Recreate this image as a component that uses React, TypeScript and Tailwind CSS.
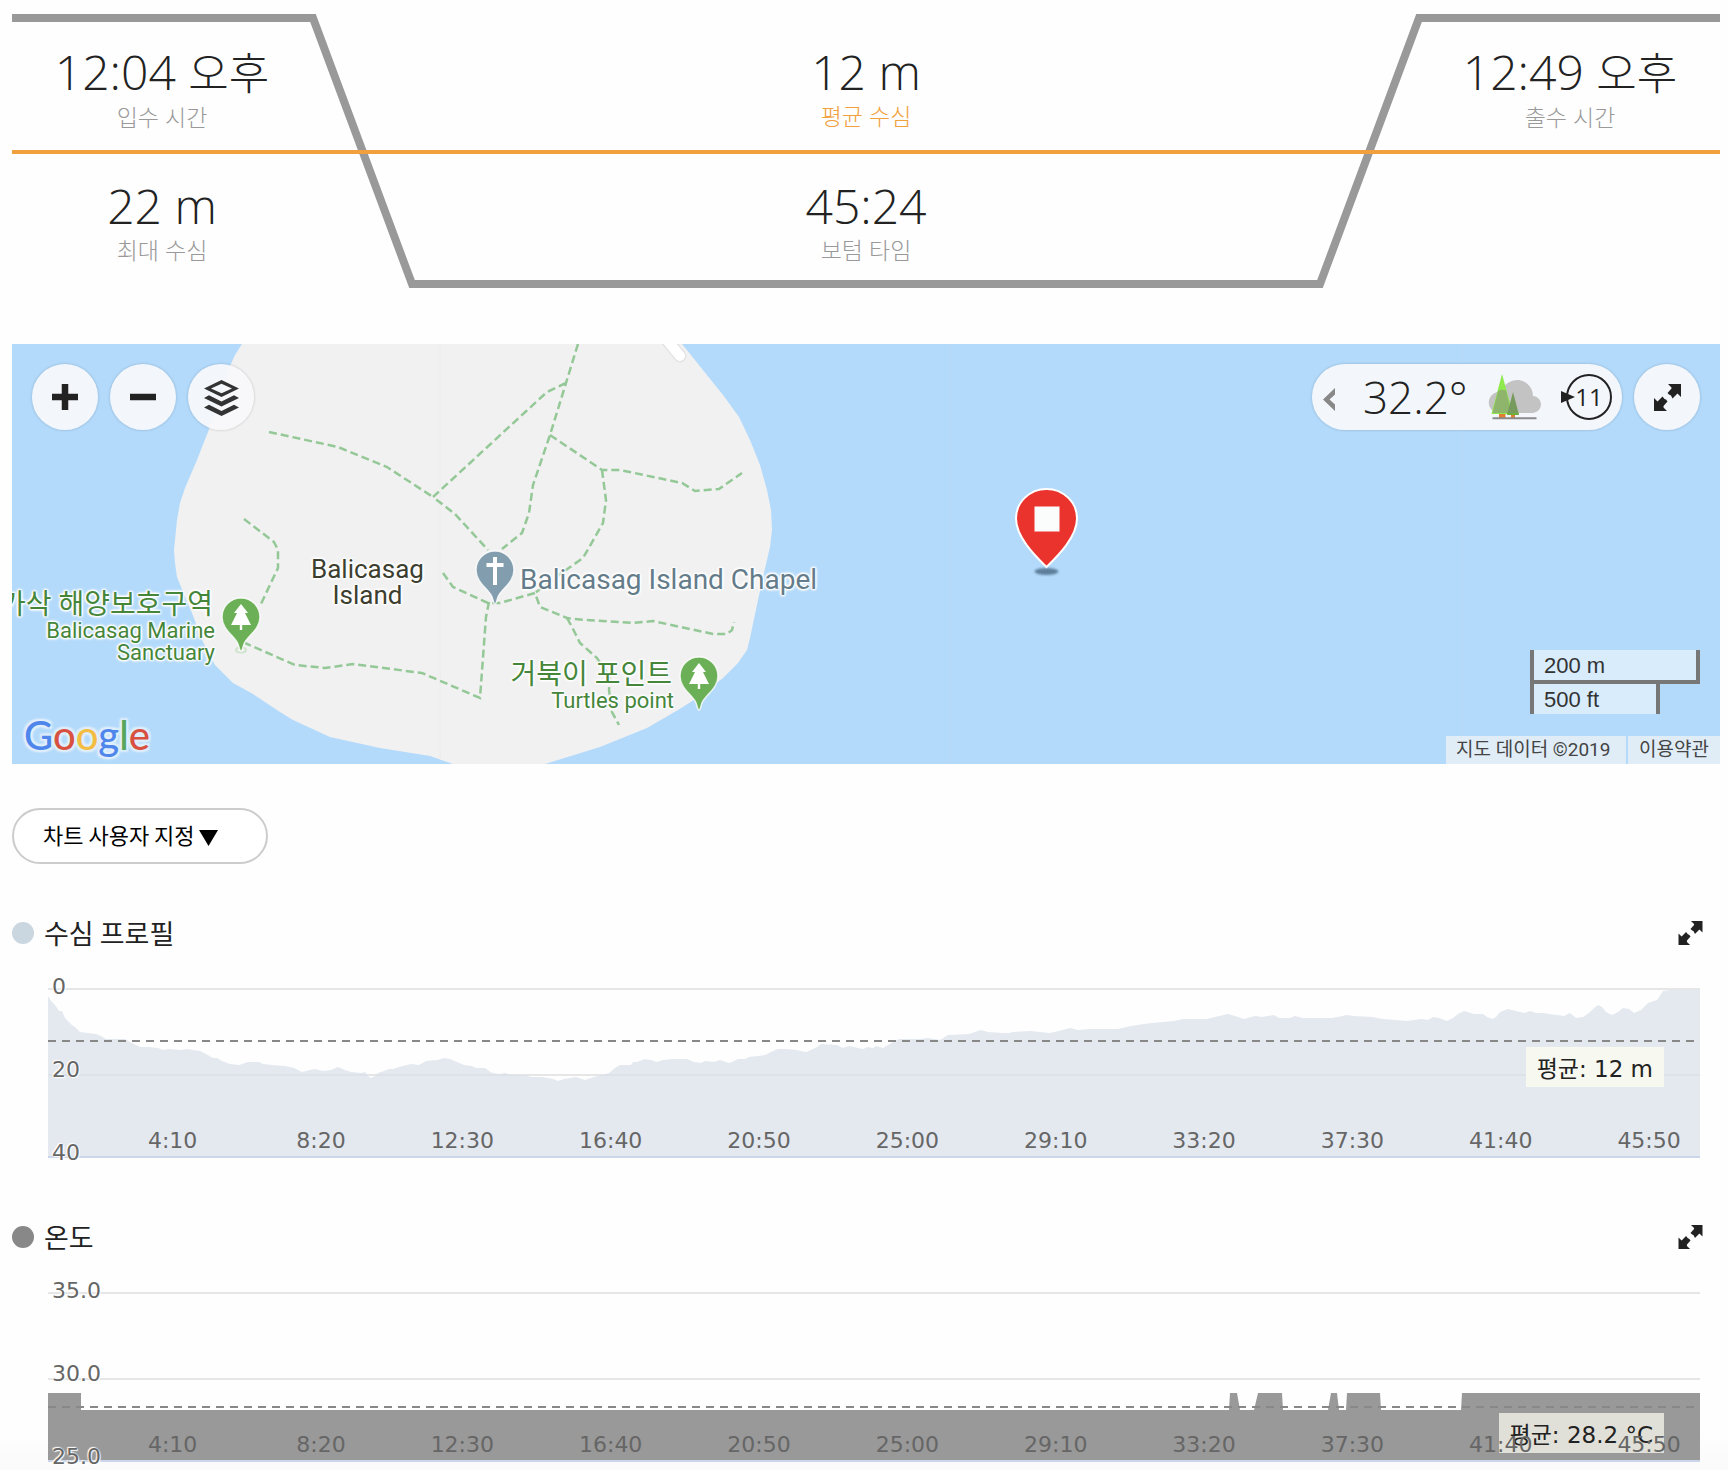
import type { ReactNode } from "react";

const LIGHT = "font-['Open_Sans','Noto_Sans_CJK_KR',sans-serif] font-light";
const CHART = "font-['DejaVu_Sans','Noto_Sans_CJK_KR',sans-serif]";
const MAP = "font-['Roboto','Noto_Sans_CJK_KR',sans-serif]";
const HALO =
  "[text-shadow:0_0_2px_#fff,0_0_2px_#fff,1px_1px_2px_#fff,-1px_-1px_2px_#fff,1px_-1px_2px_#fff,-1px_1px_2px_#fff,0_0_4px_#fff]";

type StatProps = { value: string; meridiem?: string; label: string; accent?: boolean };

function Stat({ value, meridiem, label, accent = false }: StatProps) {
  return (
    <div className={`flex flex-col items-center gap-[2px] pt-[26px] ${LIGHT}`}>
      <div className="text-[48px] leading-[56px] whitespace-nowrap text-[#222]">
        {value}
        {meridiem && (
          <>
            {" "}
            <span className="text-[44px]">{meridiem}</span>
          </>
        )}
      </div>
      <div
        className={
          accent
            ? "text-[23px] leading-7 text-[#f0a03c]"
            : "text-[23px] leading-7 text-[#999]"
        }
      >
        {label}
      </div>
    </div>
  );
}

function DiveSummary() {
  return (
    <section className="relative h-[274px]">
      <svg
        className="absolute inset-0 h-full w-full"
        viewBox="0 0 1708 274"
        preserveAspectRatio="none"
        fill="none"
        aria-hidden="true"
      >
        <path
          d="M0 4H301L400 270H1308L1407 4H1708"
          stroke="#999"
          strokeWidth="8"
          vectorEffect="non-scaling-stroke"
        />
        <path d="M0 138H1708" stroke="#f0a03c" strokeWidth="4" vectorEffect="non-scaling-stroke" />
      </svg>
      <div className="relative grid grid-cols-[300px_1fr_300px] grid-rows-[134px_134px] pt-1">
        <Stat value="12:04" meridiem="오후" label="입수 시간" />
        <Stat value="12 m" label="평균 수심" accent />
        <Stat value="12:49" meridiem="오후" label="출수 시간" />
        <Stat value="22 m" label="최대 수심" />
        <Stat value="45:24" label="보텀 타임" />
      </div>
    </section>
  );
}

function ExpandIcon({ className }: { className: string }) {
  return (
    <svg className={className} viewBox="0 0 27 27" fill="#222" aria-hidden="true">
      <path d="M14 0H27V13L23.5 9.5L18.5 14.5L17 11.5L15 10.5L13.5 9L17.5 4.5V3.5Z" />
      <path d="M13 27H0V14L3.5 17.5L8.5 12.5L10.5 15L12 15.5L13.5 17.5L9.5 22V23.5Z" />
    </svg>
  );
}

function RoundButton({ label, children }: { label: string; children: ReactNode }) {
  return (
    <button
      type="button"
      aria-label={label}
      className="flex size-[66px] items-center justify-center rounded-full bg-[#f9f9fb]/92 shadow-[0_0_3px_rgba(0,0,0,0.2)]"
    >
      {children}
    </button>
  );
}

function Pin({ x, y, color, children }: { x: number; y: number; color: string; children: ReactNode }) {
  return (
    <g transform={`translate(${x} ${y})`}>
      <path
        d="M0 34C-1.5 34-1.5 31-3 27C-6 19-19 13-19 0A19 19 0 0 1 19 0C19 13 6 19 3 27C1.5 31 1.5 34 0 34Z"
        fill={color}
        stroke="#fff"
        strokeOpacity="0.8"
        strokeWidth="1.5"
      />
      {children}
    </g>
  );
}

function Tree() {
  return <path d="M0-13L7-4H4L10 8H1.200V13H-1.200V8H-10L-4-4H-7Z" fill="#fff" />;
}

function MapCanvas() {
  return (
    <svg className="absolute top-0 left-0 h-[420px] w-[1708px]" viewBox="0 0 1708 420" aria-hidden="true">
      <path
        fill="#f1f1f1"
        d="M230 0L223 11L218 22L208 55L196 88L190 103L185 116L173 144L168 159L165 176L162 206L163 219L165 233L171 248L180 269L190 296L203 321L221 339L241 350L268 368L281 376L318 393L368 404L418 412L441 420H533L588 403L635 384L666 366L685 354L711 334L726 319L735 306L738 294L746 256L751 233L758 203L760 186L759 166L755 146L748 121L738 96L727 73L711 51L670 0Z"
      />
      <path d="M428 0V414" stroke="#ececec" />
      <path d="M939 0V420M1451 0V420" stroke="#b7dbf6" />
      <path d="M650-10L668 12" stroke="#e4e4e4" strokeWidth="13" strokeLinecap="round" />
      <path d="M650-10L668 12" stroke="#fff" strokeWidth="10" strokeLinecap="round" />
      <g fill="none" stroke="#94c897" strokeWidth="2.500" strokeDasharray="8 4">
        <path d="M257 88L326 103L375 123L421 153" />
        <path d="M566 0L554 39L538 91L521 141L517 169L510 189L490 205" />
        <path d="M554 39L535 48L421 153L443 170L476 206" />
        <path d="M538 91L590 126H608L670 139L683 147L707 145L730 129" />
        <path d="M590 126L594 156L591 179L571 214L551 228L523 249" />
        <path d="M431 229L441 243L476 259H488L523 249L528 263L555 274L561 275L621 279L641 277L701 290H715L720 286L722 278" />
        <path d="M555 274L560 283L568 299L585 314L598 333L597 346L600 368L607 381" />
        <path d="M477 258L474 273L468 354L410 329L341 320L313 324L283 321L233 299" />
        <path d="M232 175L262 198L266 206V224L248 262" />
      </g>
      <ellipse cx="229" cy="306" rx="5" ry="2.500" fill="none" stroke="#cfe3cf" strokeWidth="2" />
      <Pin x={229} y={273} color="#6bb057">
        <Tree />
      </Pin>
      <Pin x={483} y={226} color="#829eae">
        <path d="M-2-13H2V-7H8.500V-3H2V15H-2V-3H-8.500V-7H-2Z" fill="#fff" />
      </Pin>
      <Pin x={687} y={332} color="#6bb057">
        <Tree />
      </Pin>
      <ellipse cx="1034.500" cy="227.500" rx="12" ry="3.500" fill="#5e7f9b" className="blur-[1px]" />
      <path
        d="M1034.500 223C1025.500 214 1004 194 1004 174.500A30.500 29.500 0 0 1 1065 174.500C1065 194 1043.500 214 1034.500 223Z"
        fill="#eb332e"
        stroke="#fff"
        strokeWidth="2"
      />
      <rect x="1022.500" y="162.500" width="25" height="25" fill="#fbfdfd" />
    </svg>
  );
}

function WeatherIcon() {
  return (
    <svg className="h-[46px] w-[54px]" viewBox="0 0 54 46" aria-hidden="true">
      <path d="M10.500 39A10.500 10.500 0 0 1 14.500 18A16 16 0 0 1 46 22A8.500 8.500 0 0 1 45 39Z" fill="#c3c3c3" />
      <path d="M15 0L26 40H4.500Z" fill="#8fe84c" />
      <path d="M11 17A10 10 0 0 1 19 16.500L24.500 39H5.500Z" fill="#8fb46c" />
      <path d="M26 18L32 41H20Z" fill="#779a5e" />
      <path d="M20.500 39H31.500L32 41H20Z" fill="#6fae3d" />
      <path d="M12 40H18.500V44H12ZM24 41H28V44H24Z" fill="#e07f33" />
      <path d="M5.500 44.300H49.500" stroke="#8a8a8a" strokeWidth="2" />
    </svg>
  );
}

function DiveMap() {
  return (
    <section aria-label="지도" className={`relative mt-14 h-[420px] overflow-hidden bg-[#b3dafb] ${MAP}`}>
      <MapCanvas />

      <div className={`absolute top-[212px] left-[299px] text-center text-[26px] leading-[26px] text-[#3c3f30] ${HALO}`}>
        Balicasag
        <br />
        Island
      </div>
      <div className={`absolute top-[220px] left-[508px] text-[28px] leading-8 whitespace-nowrap text-[#647c8a] ${HALO}`}>
        Balicasag Island Chapel
      </div>
      <div className={`absolute top-[246px] left-0 flex w-[203px] flex-col items-end text-[#45863a] ${HALO}`}>
        <span className="pr-[2px] text-[28px] leading-[30px] whitespace-nowrap">카삭 해양보호구역</span>
        <span className="text-[22px] leading-[22px]">Balicasag Marine</span>
        <span className="text-[22px] leading-[22px]">Sanctuary</span>
      </div>
      <div className={`absolute top-[316px] left-[463px] flex w-[199px] flex-col items-end text-[#45863a] ${HALO}`}>
        <span className="pr-[2px] text-[28px] leading-[30px] whitespace-nowrap">거북이 포인트</span>
        <span className="text-[22px] leading-[22px]">Turtles point</span>
      </div>

      <div className="absolute inset-x-5 top-5 flex items-start justify-between">
        <div className="flex gap-3">
          <RoundButton label="확대">
            <svg className="size-[26px]" viewBox="0 0 26 26" aria-hidden="true">
              <path d="M13 0V26M0 13H26" stroke="#222" strokeWidth="6.500" />
            </svg>
          </RoundButton>
          <RoundButton label="축소">
            <svg className="size-[26px]" viewBox="0 0 26 26" aria-hidden="true">
              <path d="M0 13H26" stroke="#222" strokeWidth="6.500" />
            </svg>
          </RoundButton>
          <RoundButton label="레이어">
            <svg className="mt-[2px] h-9 w-[35px]" viewBox="0 0 35 36" fill="#333" aria-hidden="true">
              <path
                fillRule="evenodd"
                d="M0 8.500L17.500 0L35 8.500L17.500 17ZM7 8.500L17.500 13.300L28 8.500L17.500 3.700Z"
              />
              <path d="M0 18L5 15.300L17.500 21.500L30 15.300L35 18L17.500 26.500Z" />
              <path d="M0 27.500L5 24.800L17.500 31L30 24.800L35 27.500L17.500 36Z" />
            </svg>
          </RoundButton>
        </div>
        <div className="flex gap-3">
          <button
            type="button"
            aria-label="날씨"
            className="flex h-[66px] w-[310px] items-center rounded-full bg-[#f9f9fb]/92 pl-[11px] shadow-[0_0_3px_rgba(0,0,0,0.2)]"
          >
            <svg className="mt-1 h-[23px] w-3" viewBox="0 0 12 23" fill="#888" aria-hidden="true">
              <path d="M12 0V6.500L6.500 11.500L12 16.500V23L0 11.500Z" />
            </svg>
            <span className={`ml-7 w-[124px] text-left text-[44px] leading-[66px] text-[#222] ${LIGHT}`}>32.2°</span>
            <WeatherIcon />
            <span className="relative ml-[25px] flex size-[46px] items-center justify-center rounded-full border-2 border-[#222] font-['Open_Sans',sans-serif] text-[24px] text-[#222]">
              <svg className="absolute top-[15px] -left-[7px] h-3 w-[14px]" viewBox="0 0 14 12" fill="#222" aria-hidden="true">
                <path d="M0 0L14 6L0 12Z" />
              </svg>
              11
            </span>
          </button>
          <RoundButton label="전체 화면">
            <ExpandIcon className="size-[27px]" />
          </RoundButton>
        </div>
      </div>

      <div className="absolute top-[306px] right-5 w-[170px] font-['Liberation_Sans',sans-serif] text-[22px] leading-7 text-[#333]">
        <div className="border-4 border-t-0 border-[#777] bg-[#d9ecfc] pt-[2px] pl-[10px]">200 m</div>
        <div className="w-[130px] border-x-4 border-[#777] bg-[#d9ecfc] pt-[2px] pl-[10px]">500 ft</div>
      </div>

      <a
        href="#google"
        className="absolute top-[363px] left-3 font-['Lato',sans-serif] text-[40px] leading-[56px] font-medium [text-shadow:0_0_3px_#e1effb,2px_2px_2px_#e1effb,-2px_-2px_2px_#e1effb,2px_-2px_2px_#e1effb,-2px_2px_2px_#e1effb]"
      >
        <span className="text-[#4f86ec]">G</span>
        <span className="text-[#d8503f]">o</span>
        <span className="text-[#f2bd42]">o</span>
        <span className="text-[#4f86ec]">g</span>
        <span className="text-[#58a55c]">l</span>
        <span className="text-[#d8503f]">e</span>
      </a>

      <div className="absolute right-0 bottom-0 flex gap-[2px] text-[19px] leading-7 whitespace-nowrap text-[#444]">
        <span className="w-[180px] bg-[#e0edf7] pl-[10px]">지도 데이터 ©2019</span>
        <a href="#terms" className="w-[92px] bg-[#e0edf7] pl-[11px]">
          이용약관
        </a>
      </div>
    </section>
  );
}

const TIMES = ["4:10", "8:20", "12:30", "16:40", "20:50", "25:00", "29:10", "33:20", "37:30", "41:40", "45:50"];

const DEPTH_AREA =
  "M0 7L3 12L7 16L11 22L14 22L17 29L24 36L27 38L32 43L40 44L48 45L53 47L58 50L70 50L77 50L84 54L92 58L101 58L110 59L115 61L121 60L132 61L140 60L145 61L152 62L158 65L165 69L169 69L174 72L182 75L191 76L200 73L211 73L215 75L224 76L237 77L246 79L254 83L262 81L267 80L275 82L283 81L290 78L297 81L303 83L314 84L317 83L320 87L323 89L327 87L330 84L336 82L341 80L345 80L351 78L363 75L371 76L378 72L389 71L396 69L402 70L409 73L416 76L424 77L428 79L437 79L444 84L452 85L457 84L464 86L477 86L483 88L494 88L505 90L510 92L516 90L528 88L537 91L546 88L561 84L567 79L572 76L583 76L585 73L589 73L597 70L603 71L609 73L615 71L625 70L639 70L646 73L653 74L657 72L666 73L672 71L681 74L686 72L690 70L697 70L701 68L717 66L723 63L730 60L739 60L748 61L758 63L763 61L769 58L773 55L789 56L795 59L801 57L815 60L820 58L825 59L828 57L835 59L840 56L851 50L873 50L880 49L892 51L900 46L921 45L933 41L940 43L954 44L961 44L965 43L982 42L1002 44L1015 41L1022 39L1030 41L1042 40L1070 40L1083 37L1096 35L1104 34L1126 32L1135 30L1159 30L1167 28L1180 25L1187 27L1196 30L1207 27L1214 28L1226 26L1231 29L1242 29L1247 27L1255 29L1284 29L1295 27L1298 26L1306 27L1324 28L1335 30L1359 32L1374 30L1380 31L1385 28L1391 29L1399 32L1405 29L1410 25L1416 22L1426 25L1435 25L1439 28L1445 30L1448 28L1452 23L1460 20L1468 22L1477 24L1482 22L1488 24L1495 24L1501 25L1516 27L1522 24L1528 29L1535 28L1541 24L1546 19L1550 16L1554 18L1558 23L1564 26L1570 23L1575 19L1581 20L1586 24L1593 21L1600 14L1609 11L1615 2L1622 1H1652V168H0Z";

const TEMPERATURE_AREA =
  "M0 100H33V117H1181L1182 100H1189L1192 117H1206L1210 100H1234L1235 117H1280L1283 100H1289L1291 117H1298L1299 100H1332L1333 117H1413L1414 100H1652V168H0Z";

type ChartProps = {
  title: string;
  dot: string;
  area: string;
  fill: string;
  averageY: number;
  ticks: string[];
  children: ReactNode;
};

function Chart({ title, dot, area, fill, averageY, ticks, children }: ChartProps) {
  return (
    <section className={CHART}>
      <header className="flex h-8 items-center pr-[17px]">
        <span className={`size-[22px] rounded-full ${dot}`} />
        <h2 className="ml-[10px] flex-1 font-['Noto_Sans_CJK_KR',sans-serif] text-[27px] leading-8 font-normal text-[#222]">
          {title}
        </h2>
        <button type="button" aria-label={`${title} 전체 화면`}>
          <ExpandIcon className="h-6 w-[25px]" />
        </button>
      </header>
      <div className="relative mt-10 mr-5 ml-9 h-[169px]">
        <svg
          className="absolute top-0 left-0 h-[168px] w-full overflow-visible"
          viewBox="0 0 1652 168"
          preserveAspectRatio="none"
          aria-hidden="true"
        >
          <g strokeWidth="2" fill="none">
            <path d="M0 0H1652M0 86H1652" stroke="#e6e6e6" vectorEffect="non-scaling-stroke" />
            <path d={area} className={fill} />
            <path d="M0 168H1652" stroke="#ccd6eb" vectorEffect="non-scaling-stroke" />
            <path
              d={`M0 ${averageY}H1652`}
              stroke="#888"
              strokeDasharray="8 6"
              vectorEffect="non-scaling-stroke"
            />
          </g>
        </svg>
        {children}
        <div
          className="absolute -top-[13px] left-1 flex h-[188px] flex-col justify-between text-[22px] leading-none text-[#666] [text-shadow:0_0_2px_#fff,1px_1px_1px_#fff,-1px_-1px_1px_#fff]"
        >
          {ticks.map((tick) => (
            <span key={tick}>{tick}</span>
          ))}
        </div>
        <div className="absolute top-[141px] left-px flex w-full text-[22px] leading-none text-[#666]">
          {TIMES.map((time) => (
            <span key={time} className="w-[8.98%] text-right">
              {time}
            </span>
          ))}
        </div>
      </div>
    </section>
  );
}

export default function App() {
  return (
    <main className="bg-[linear-gradient(to_top,#fafafa,#fefefe_40px)] pt-[14px] pr-2 pb-2 pl-3">
      <DiveSummary />
      <DiveMap />
      <button
        type="button"
        className="mt-11 flex h-14 w-64 items-center gap-1 rounded-full border-2 border-[#ccc] bg-white pb-1 pl-[29px] font-['Noto_Sans_CJK_KR',sans-serif] text-[22px] leading-7 whitespace-nowrap text-black"
      >
        차트 사용자 지정
        <svg className="mt-2 h-4 w-[19px]" viewBox="0 0 19 16" aria-hidden="true">
          <path d="M0 0H19L9.500 16Z" />
        </svg>
      </button>
      <div className="mt-[53px] flex flex-col gap-[63px]">
        <Chart
          title="수심 프로필"
          dot="bg-[#cad7e1]"
          area={DEPTH_AREA}
          fill="fill-[#d9e0ea]/70"
          averageY={52}
          ticks={["0", "20", "40"]}
        >
          <div className="absolute top-[58px] right-9 bg-[#f7f8f0] px-[11px] pt-1 text-[23px] leading-9 whitespace-nowrap text-[#222]">
            평균: 12 m
          </div>
        </Chart>
        <Chart
          title="온도"
          dot="bg-[#888]"
          area={TEMPERATURE_AREA}
          fill="fill-[#999]"
          averageY={114}
          ticks={["35.0", "30.0", "25.0"]}
        >
          <div className="absolute top-[120px] right-9 bg-[#e0e0d8] px-[11px] pt-1 text-[23px] leading-9 whitespace-nowrap text-[#222]">
            평균: 28.2 °C
          </div>
        </Chart>
      </div>
    </main>
  );
}
